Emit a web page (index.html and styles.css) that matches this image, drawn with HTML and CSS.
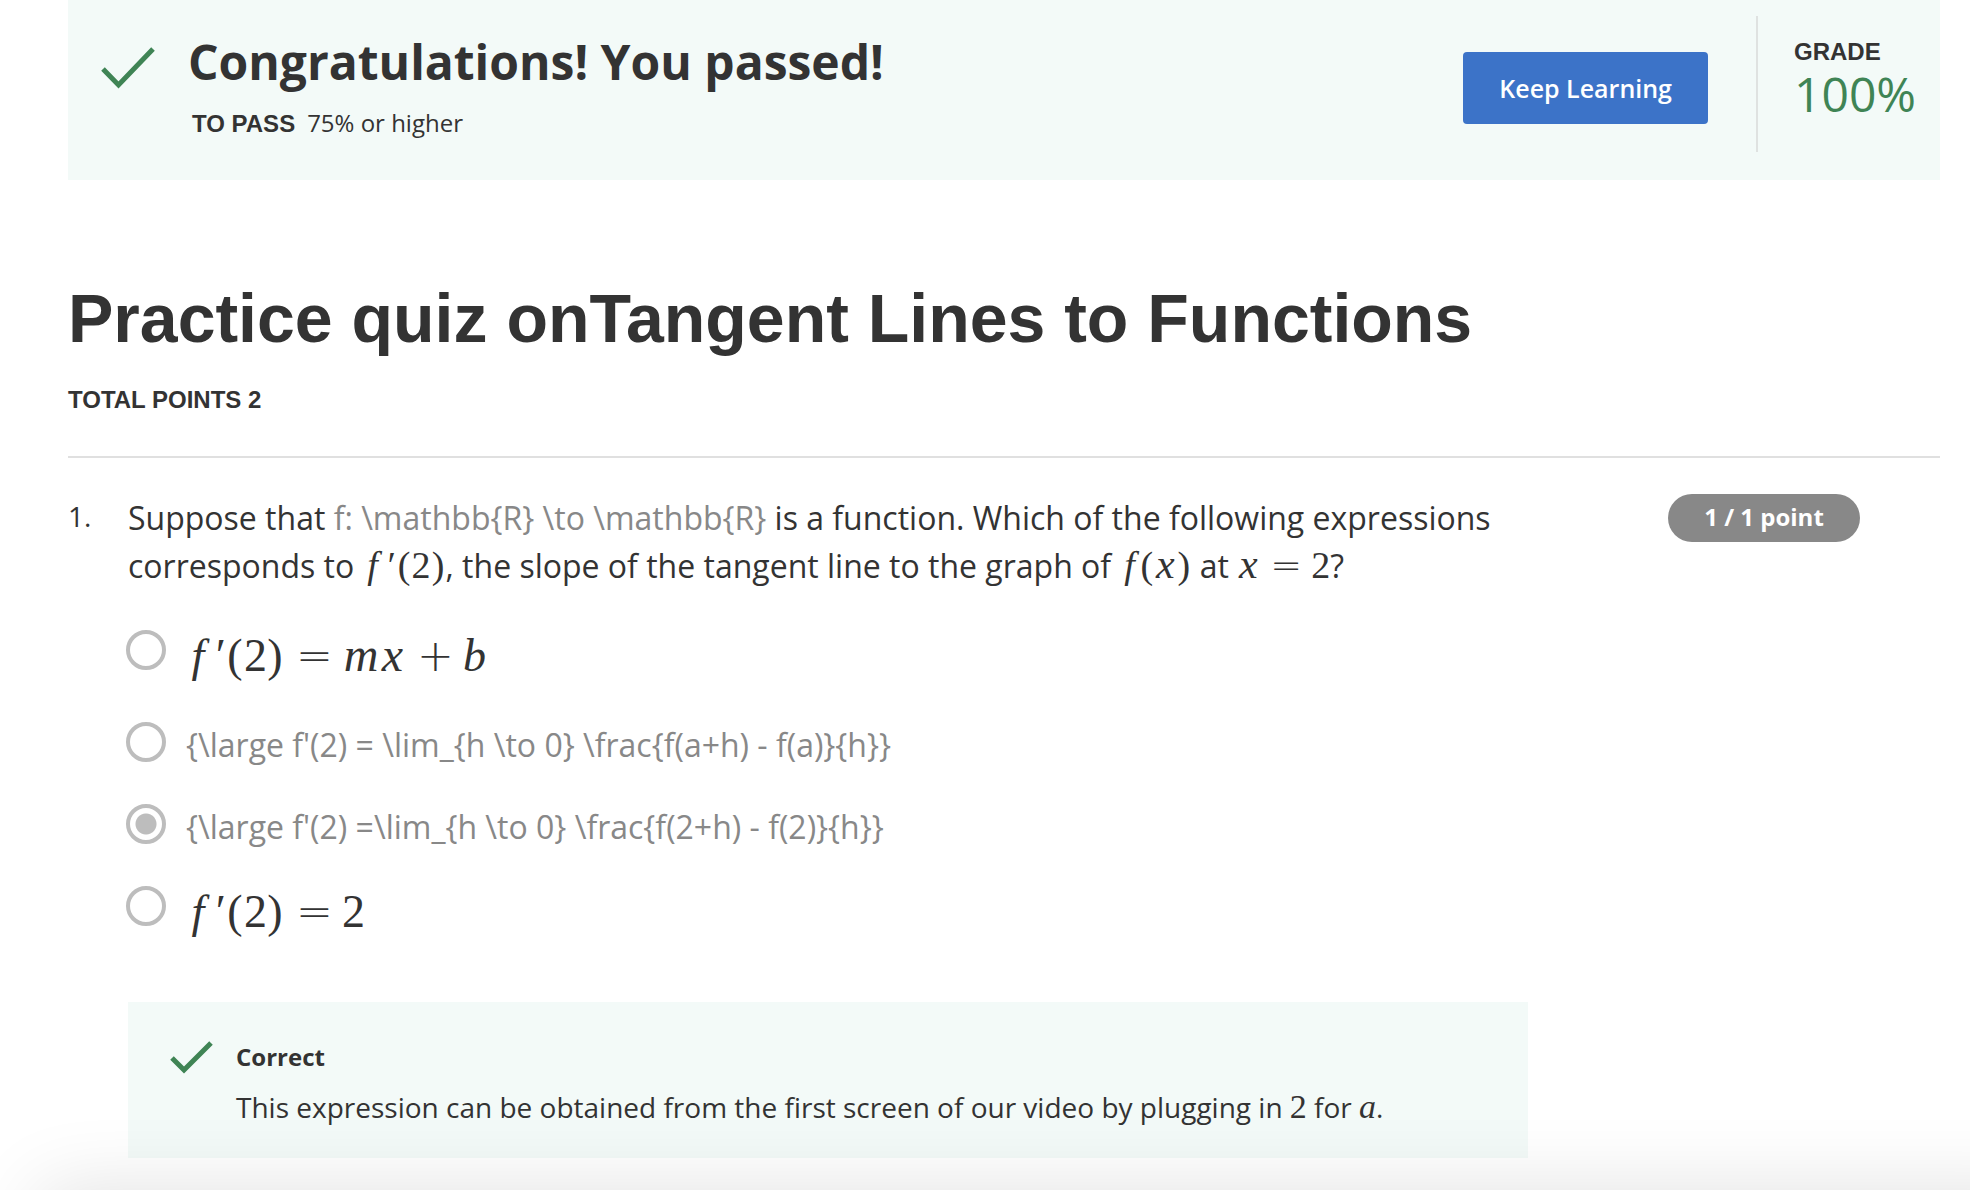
FILE: index.html
```html
<!DOCTYPE html>
<html lang="en">
<head>
<meta charset="utf-8">
<title>Practice quiz on Tangent Lines to Functions</title>
<link rel="stylesheet" href="styles.css">
</head>
<body>
<main class="page">
  <header class="banner">
    <svg class="banner-check" viewBox="0 0 54 42" aria-hidden="true"><path d="M2 22 17.500 38 52 2" /></svg>
    <div class="banner-text">
      <h2 class="banner-title">Congratulations! You passed!</h2>
      <p class="banner-pass"><strong class="caps">TO PASS</strong><span>75% or higher</span></p>
    </div>
    <button class="keep" type="button">Keep Learning</button>
    <div class="grade">
      <span class="caps">GRADE</span>
      <span class="grade-value">100%</span>
    </div>
  </header>

  <h1 class="title">Practice quiz onTangent Lines to Functions</h1>
  <p class="total caps">TOTAL POINTS 2</p>

  <section class="question">
    <span class="number">1.</span>
    <div class="body">
      <p class="prompt" id="prompt">Suppose that <span class="raw">f: \mathbb{R} \to \mathbb{R}</span> is a function. Which of the following expressions corresponds to <span class="math"><i class="f">f</i><i class="prime">′</i><span class="paren">(</span><span class="num">2</span><span class="paren">)</span></span>, the slope of the tangent line to the graph of <span class="math"><i class="f">f</i><span class="paren">(</span><i class="x">x</i><span class="paren">)</span></span> at <span class="math"><i class="x">x</i><span class="op">=</span><span class="num">2</span></span>?</p>
      <div class="options" role="radiogroup" aria-labelledby="prompt">
        <label class="option option-tall"><input class="radio" type="radio" name="answer"><span class="math math-large"><i class="f">f</i><i class="prime">′</i><span class="paren">(</span><span class="num">2</span><span class="paren">)</span><span class="op">=</span><i class="m">m</i><i class="x">x</i><span class="op">+</span><i class="num">b</i></span></label>
        <label class="option"><input class="radio" type="radio" name="answer"><span class="raw">{\large f'(2) = \lim_{h \to 0} \frac{f(a+h) - f(a)}{h}}</span></label>
        <label class="option"><input class="radio" type="radio" name="answer" checked><span class="raw">{\large f'(2) =\lim_{h \to 0} \frac{f(2+h) - f(2)}{h}}</span></label>
        <label class="option"><input class="radio" type="radio" name="answer"><span class="math math-large"><i class="f">f</i><i class="prime">′</i><span class="paren">(</span><span class="num">2</span><span class="paren">)</span><span class="op">=</span><span class="num">2</span></span></label>
      </div>
      <div class="feedback">
        <svg class="feedback-check" viewBox="0 0 44 34" aria-hidden="true"><path d="M2 17 14 29 41 2" /></svg>
        <div>
          <p class="feedback-title">Correct</p>
          <p class="feedback-text">This expression can be obtained from the first screen of our video by plugging in <span class="math">2</span> for <span class="math"><i>a</i></span>.</p>
        </div>
      </div>
    </div>
    <span class="points">1 / 1 point</span>
  </section>
</main>
<div class="shade"></div>
</body>
</html>
```
FILE: styles.css
```css
* { box-sizing: border-box; }

body {
  margin: 0;
  background: #fff;
  color: #333;
  font-family: "Open Sans", sans-serif;
  font-size: 32px;
  line-height: 48px;
  overflow-x: hidden;
}

h1, h2, p { margin: 0; }

.page { padding: 0 30px 32px 68px; }

.caps {
  font: bold 24px/32px "Liberation Sans", Arial, sans-serif;
}

.banner {
  display: flex;
  align-items: flex-start;
  min-height: 180px;
  padding: 16px 24px 0 33px;
  background: #f3faf8;
}

.banner-check {
  flex: none;
  width: 54px;
  height: 42px;
  margin-top: 31px;
}

svg path {
  fill: none;
  stroke: #3f8455;
  stroke-width: 5;
}

.banner-text {
  flex: 1;
  padding: 14px 0 0 33px;
}

.banner-title {
  font-size: 48px;
  line-height: 64px;
}

.banner-pass {
  display: flex;
  align-items: baseline;
  gap: 12px;
  margin-top: 13px;
  padding-left: 4px;
  font-size: 24px;
  line-height: 32px;
}

.keep {
  height: 72px;
  margin: 36px 48px 0 0;
  padding: 0 36px;
  border: 0;
  border-radius: 4px;
  background: #3c73c8;
  color: #fff;
  font: 600 25px/36px "Open Sans", sans-serif;
}

.grade {
  display: flex;
  flex-direction: column;
  height: 136px;
  padding: 20px 0 0 36px;
  border-left: 2px solid #dfe2e1;
}

.grade-value {
  color: #3f8455;
  font-size: 48px;
  line-height: 52px;
}

.title {
  margin-top: 96px;
  font: bold 68px/84px "Liberation Sans", Arial, sans-serif;
}

.total { margin-top: 24px; }

.question {
  display: grid;
  grid-template-columns: 60px minmax(0, 1400px) minmax(192px, 1fr);
  margin-top: 40px;
  padding: 36px 80px 0 0;
  border-top: 2px solid #e0e0e0;
}

.number {
  font-size: 28px;
  line-height: 44px;
}

.points {
  justify-self: end;
  width: 192px;
  height: 48px;
  border-radius: 24px;
  background: #888;
  color: #fff;
  font-size: 24px;
  font-weight: 700;
  line-height: 46px;
  text-align: center;
}

.raw { color: #888; }

/* Formulas: each symbol sits centred in a cell of its own width */
.math {
  font-family: "Liberation Serif", "Times New Roman", serif;
  font-size: 38px;
  line-height: 1;
  white-space: nowrap;
}
.math > [class] {
  display: inline-block;
  line-height: 40px;
  text-align: center;
}
.f { width: 20px; }
.prime { width: 14px; }
.paren { width: 15px; }
.num { width: 19px; }
.x { width: 22px; font-size: 42px; }
.m { width: 38px; font-size: 48px; }
.op {
  width: 30px;
  margin: 0 11px;
  font-family: "DejaVu Sans", sans-serif;
  font-weight: 200;
}

.math-large {
  font-size: 46px;
  line-height: 52px;
}
.math-large .f { width: 24px; }
.math-large .prime { width: 16px; }
.math-large .paren { width: 18px; }
.math-large .num { width: 22px; }
.math-large .x { width: 25px; font-size: 48px; }
.math-large .op {
  width: 34px;
  margin: 0 12px;
  font-size: 44px;
}

.options { margin-top: 40px; }

.option {
  display: flex;
  align-items: flex-start;
  gap: 20px;
  height: 82px;
  margin-left: -2px;
}
.option-tall { height: 92px; }
.option .raw { line-height: 46px; }

.radio {
  appearance: none;
  flex: none;
  width: 40px;
  height: 40px;
  margin: 0;
  border: 4px solid #bdbdbd;
  border-radius: 50%;
}
.radio:checked {
  background: radial-gradient(circle, #bdbdbd 10px, transparent 11px);
}

.feedback {
  display: flex;
  align-items: flex-start;
  gap: 22px;
  min-height: 156px;
  margin-top: 34px;
  padding: 34px 42px 22px;
  background: #f3faf8;
}

.feedback-check {
  flex: none;
  width: 44px;
  height: 34px;
  margin-top: 5px;
}

.feedback-title {
  font-size: 24px;
  font-weight: 700;
  line-height: 42px;
}

.feedback-text {
  font-size: 28px;
  line-height: 58px;
}
.feedback-text .math { font-size: 34px; }

.shade {
  position: fixed;
  top: 100%;
  left: 40px;
  right: -80px;
  height: 100px;
  box-shadow: 0 0 80px rgba(0, 0, 0, 0.12);
}
```
